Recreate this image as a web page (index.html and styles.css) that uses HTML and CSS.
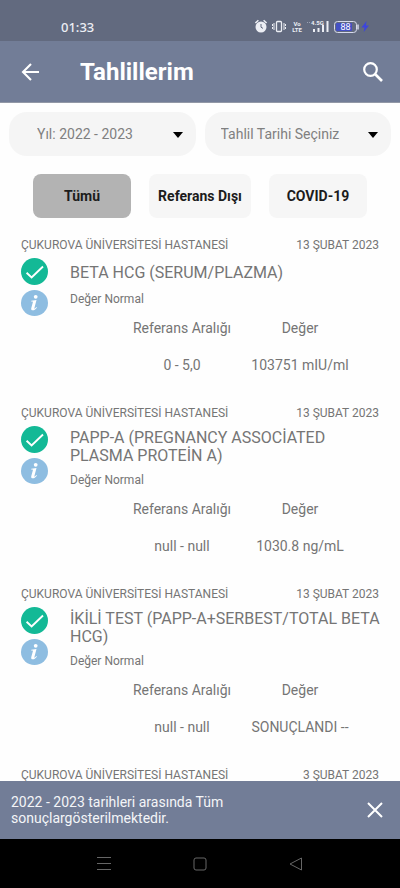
FILE: index.html
```html
<!DOCTYPE html>
<html lang="tr">
<head>
<meta charset="utf-8">
<meta name="viewport" content="width=device-width, initial-scale=1">
<title>Tahlillerim</title>
<link rel="stylesheet" href="styles.css">
</head>
<body>
<svg class="sprite" aria-hidden="true">
  <symbol id="ok" viewBox="0 0 27 27">
    <circle cx="13.500" cy="13.500" r="13.500" fill="#13b996"/>
    <path d="M5.600 14.800l5 4.600L22 8.500" fill="none" stroke="#fff" stroke-width="1.900"/>
  </symbol>
  <symbol id="info" viewBox="0 0 27 26">
    <ellipse cx="13.500" cy="13" rx="13.500" ry="13" fill="#8ebde1"/>
    <circle cx="14.700" cy="6.800" r="1.900" fill="#fff"/>
    <path d="M10.300 10.700l5.200-.7-2.100 7.900c-.2.900.3.900.8.400l1.200-1.300.5.400c-1.200 1.800-2.500 2.900-4 2.900-1.500 0-2-.9-1.600-2.300l1.500-5.400c.2-.8 0-1.100-.6-1.100h-1.100z" fill="#fff"/>
  </symbol>
</svg>
<div class="status">
  <span class="clock">01:33</span>
  <svg class="status-icons" viewBox="0 0 116 16" aria-hidden="true">
    <g fill="#eceef4">
      <circle cx="7" cy="9" r="5.500"/>
      <path d="M1.400 5l3-2.800M12.600 5l-3-2.800" stroke="#eceef4" stroke-width="1.500"/>
      <path d="M7 6v3.200l2 1.200" fill="none" stroke="#626a7f"/>
    </g>
    <g fill="none" stroke="#eceef4">
      <rect x="22.500" y="3.500" width="5" height="10" rx="1" stroke-width="1.300"/>
      <path d="M20 5v7M30 5v7"/>
      <path d="M18.500 6v2M18.500 9v2M31.500 6v2M31.500 9v2"/>
    </g>
    <g class="tiny">
      <text x="43" y="8" text-anchor="middle">Vo</text><text x="43" y="14" text-anchor="middle">LTE</text>
      <text x="57" y="7">4.5G</text>
    </g>
    <path d="M59 11h2v3h-2zM63.500 10h2v4h-2zM68 7h2v7h-2zM72.500 3h2v11h-2z" fill="#eceef4"/>
    <path d="M53 4h1v1h-1zM55 4h1v1h-1z" fill="#9ba2b3"/>
    <rect x="80.500" y="3.500" width="22" height="11" rx="3" fill="none" stroke="#d7daeb"/>
    <rect x="82" y="5" width="16" height="8" rx="1" fill="#4450c4"/>
    <path d="M104 6.500v5" stroke="#d7daeb" stroke-width="1.500"/>
    <text class="charge" x="91.500" y="12" text-anchor="middle">88</text>
    <path d="M112.500 3l-5 6.500h3l-.8 4.500 5.300-6.500h-3z" fill="#3d45dd"/>
  </svg>
</div>
<header class="bar">
  <button class="icon-btn" aria-label="Geri">
    <svg width="20" height="20" viewBox="0 0 20 20"><path d="M18 10H2M10 2l-8 8 8 8" fill="none" stroke="#fff" stroke-width="2.100"/></svg>
  </button>
  <h1>Tahlillerim</h1>
  <button class="icon-btn" aria-label="Ara">
    <svg width="22" height="22" viewBox="0 0 22 22"><circle cx="8.500" cy="8.500" r="6.300" fill="none" stroke="#fff" stroke-width="2.200"/><path d="M13 13l7 7" stroke="#fff" stroke-width="2.600"/></svg>
  </button>
</header>
<main class="content">
  <div class="filters">
    <div class="picker picker-year">
      <select aria-label="Yıl"><option>Yıl: 2022 - 2023</option></select>
      <svg class="caret" viewBox="0 0 10 6" aria-hidden="true"><path d="M0 0h10L5 6z"/></svg>
    </div>
    <div class="picker">
      <select aria-label="Tahlil Tarihi"><option>Tahlil Tarihi Seçiniz</option></select>
      <svg class="caret" viewBox="0 0 10 6" aria-hidden="true"><path d="M0 0h10L5 6z"/></svg>
    </div>
  </div>
  <div class="chips">
    <button class="chip chip-active">Tümü</button>
    <button class="chip">Referans Dışı</button>
    <button class="chip">COVID-19</button>
  </div>

  <article class="record">
    <div class="marks"><svg class="ok"><use href="#ok"/></svg><svg class="info"><use href="#info"/></svg></div>
    <div class="meta"><span>ÇUKUROVA ÜNİVERSİTESİ HASTANESİ</span><span>13 ŞUBAT 2023</span></div>
    <div class="name"><h2>BETA HCG (SERUM/PLAZMA)</h2></div>
    <p class="state">Değer Normal</p>
    <table>
      <thead><tr><th>Referans Aralığı</th><th>Değer</th></tr></thead>
      <tbody><tr><td>0 - 5,0</td><td>103751 mIU/ml</td></tr></tbody>
    </table>
  </article>

  <article class="record">
    <div class="marks"><svg class="ok"><use href="#ok"/></svg><svg class="info"><use href="#info"/></svg></div>
    <div class="meta"><span>ÇUKUROVA ÜNİVERSİTESİ HASTANESİ</span><span>13 ŞUBAT 2023</span></div>
    <div class="name"><h2>PAPP-A (PREGNANCY ASSOCİATED PLASMA PROTEİN A)</h2></div>
    <p class="state">Değer Normal</p>
    <table>
      <thead><tr><th>Referans Aralığı</th><th>Değer</th></tr></thead>
      <tbody><tr><td>null - null</td><td>1030.8 ng/mL</td></tr></tbody>
    </table>
  </article>

  <article class="record">
    <div class="marks"><svg class="ok"><use href="#ok"/></svg><svg class="info"><use href="#info"/></svg></div>
    <div class="meta"><span>ÇUKUROVA ÜNİVERSİTESİ HASTANESİ</span><span>13 ŞUBAT 2023</span></div>
    <div class="name"><h2>İKİLİ TEST (PAPP-A+SERBEST/TOTAL BETA HCG)</h2></div>
    <p class="state">Değer Normal</p>
    <table>
      <thead><tr><th>Referans Aralığı</th><th>Değer</th></tr></thead>
      <tbody><tr><td>null - null</td><td>SONUÇLANDI --</td></tr></tbody>
    </table>
  </article>

  <article class="record">
    <div class="meta"><span>ÇUKUROVA ÜNİVERSİTESİ HASTANESİ</span><span>3 ŞUBAT 2023</span></div>
  </article>
</main>
<div class="notice" role="status">
  <p>2022 - 2023 tarihleri arasında Tüm sonuçlargösterilmektedir.</p>
  <button class="icon-btn" aria-label="Kapat">
    <svg width="16" height="16" viewBox="0 0 16 16"><path d="M1 1l14 14M15 1L1 15" stroke="#fff" stroke-width="2"/></svg>
  </button>
</div>
<nav class="system">
  <button class="icon-btn" aria-label="Menü"><svg width="14" height="14" viewBox="0 0 14 14"><path d="M0 .5h14M0 6.500h14M0 12.500h14"/></svg></button>
  <button class="icon-btn" aria-label="Ana ekran"><svg width="14" height="14" viewBox="0 0 14 14"><rect x="1" y="1" width="12" height="12" rx="2"/></svg></button>
  <button class="icon-btn" aria-label="Geri dön"><svg width="14" height="14" viewBox="0 0 14 14"><path d="M12.500 1v12L1 7z"/></svg></button>
</nav>
</body>
</html>
```
FILE: styles.css
```css
* {
  box-sizing: border-box;
}

body {
  margin: 0;
  height: 100vh;
  display: flex;
  flex-direction: column;
  font-family: Roboto, "Noto Sans", sans-serif;
  font-size: 14px;
  color: #757575;
  background: #fefefe;
}

h1, h2, p {
  margin: 0;
}

button, select {
  font: inherit;
  border: 0;
  margin: 0;
}

.sprite {
  position: absolute;
  width: 0;
  height: 0;
}

.icon-btn {
  display: flex;
  padding: 0;
  background: none;
}

.status {
  flex: none;
  height: 41px;
  padding: 12px 30px 0 61px;
  display: flex;
  justify-content: space-between;
  align-items: flex-start;
  background: #626a7f;
  color: #eceef4;
}

.clock {
  font-family: "Noto Sans", sans-serif;
  font-size: 13px;
  font-weight: 500;
  line-height: 30px;
}

.status-icons {
  width: 116px;
  height: 16px;
  margin-top: 6px;
}

.tiny {
  font: 700 6px Roboto, sans-serif;
  fill: #eceef4;
}

.charge {
  font: 9px Roboto, sans-serif;
  fill: #fff;
}

.bar {
  flex: none;
  height: 62px;
  padding: 0 16px 0 21px;
  display: flex;
  align-items: center;
  background: #727d97;
  border-bottom: 1px solid #9298a6;
  color: #fff;
}

.bar h1 {
  flex: 1;
  margin-left: 39px;
  font-size: 24px;
  line-height: 28px;
  font-weight: 700;
}

.content {
  flex: 1;
  min-height: 0;
  overflow-y: auto;
  scrollbar-width: none;
}

.filters {
  display: flex;
  gap: 9px;
  padding: 9px 9px 18px;
}

.picker {
  position: relative;
  flex: 1;
}

.picker select {
  appearance: none;
  width: 100%;
  height: 44px;
  padding: 0 32px 0 16px;
  border-radius: 18px;
  background: #f5f5f5;
  color: #808080;
}

.picker-year select {
  padding-left: 28px;
}

.caret {
  position: absolute;
  right: 13px;
  top: 20px;
  width: 10px;
  height: 6px;
  pointer-events: none;
}

.chips {
  display: flex;
  gap: 18px;
  padding: 0 33px 19px;
}

.chip {
  flex: 1 1 98px;
  height: 44px;
  padding: 0;
  border-radius: 8px;
  background: #f6f6f6;
  color: #1c1c1c;
  font-weight: 700;
  white-space: nowrap;
}

.chip:nth-child(2) {
  flex-basis: 102px;
}

.chip-active {
  background: #b3b3b3;
}

.record {
  display: grid;
  grid-template-columns: 49px 1fr;
  padding: 0 16px 31px 21px;
}

.marks {
  grid-row: 2 / 5;
  grid-column: 1;
  display: flex;
  flex-direction: column;
  gap: 5px;
  padding-top: 5px;
}

.ok {
  width: 27px;
  height: 27px;
}

.info {
  width: 27px;
  height: 26px;
}

.meta {
  grid-row: 1;
  grid-column: 1 / 3;
  display: flex;
  justify-content: space-between;
  padding-right: 5px;
  font-size: 12px;
  line-height: 16px;
}

.name {
  grid-column: 2;
  min-height: 23px;
  margin-top: 8px;
  display: flex;
  align-items: center;
}

.name h2 {
  font-size: 16px;
  font-weight: 400;
  line-height: 18px;
}

.state {
  grid-column: 2;
  margin-top: 7px;
  font-size: 12px;
  line-height: 16px;
}

.record table {
  grid-column: 2;
  width: calc(100% - 78px);
  margin: 12px 25px 0 53px;
  table-layout: fixed;
  border-collapse: collapse;
}

.record th,
.record td {
  padding: 0;
  font-weight: 400;
  line-height: 18px;
  text-align: center;
  white-space: nowrap;
}

.record td {
  padding-top: 19px;
}

.notice {
  flex: none;
  min-height: 58px;
  padding: 0 17px 0 11px;
  display: flex;
  align-items: center;
  justify-content: space-between;
  background: #727d97;
  color: #f4f5f8;
}

.notice p {
  max-width: 240px;
  line-height: 16px;
}

.system {
  flex: none;
  height: 49px;
  display: flex;
  align-items: center;
  justify-content: center;
  gap: 82px;
  background: #000;
}

.system svg {
  fill: none;
  stroke: #666;
}
```
